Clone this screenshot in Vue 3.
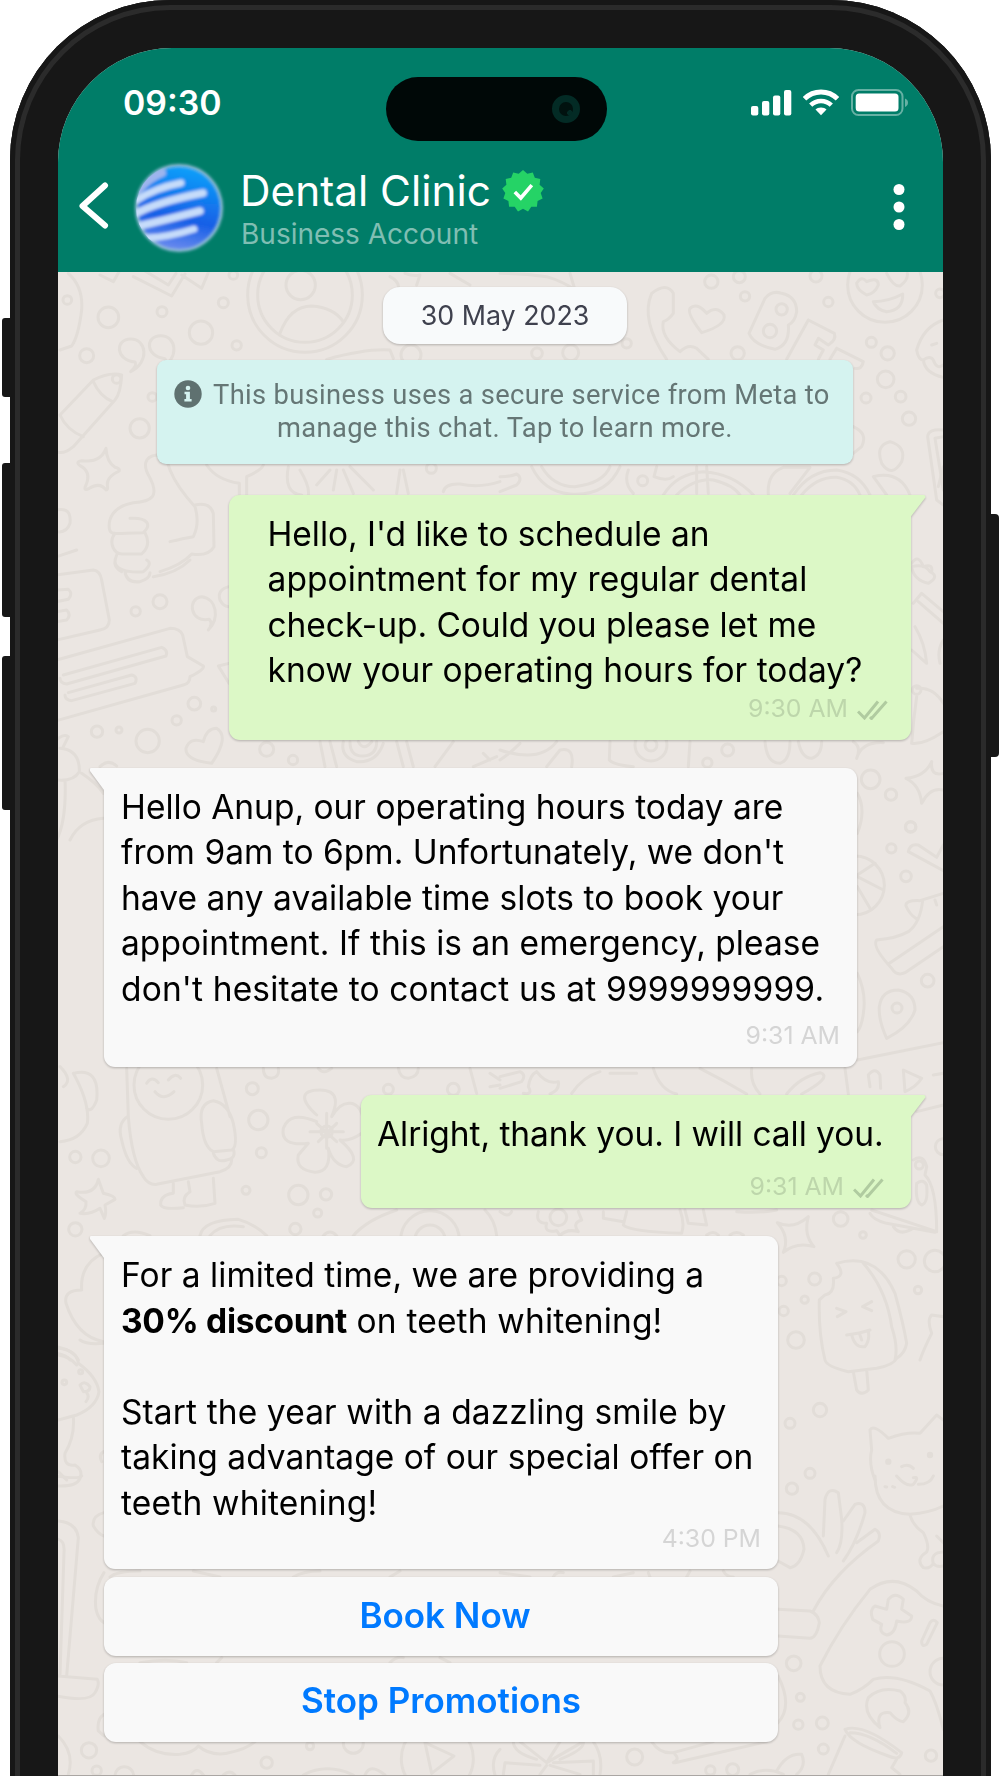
<template>
  <div class="stage">
    <span class="side-key left silent"></span>
    <span class="side-key left vol-up"></span>
    <span class="side-key left vol-down"></span>
    <span class="side-key right power"></span>

    <div class="phone">
      <div class="screen">
        <header class="top">
          <div class="status-bar">
            <span class="clock">09:30</span>
            <div class="island"><span class="camera"></span></div>
            <svg class="status-icons" width="158" height="28" viewBox="0 0 158 28">
              <g fill="#fff">
                <rect x="0" y="17" width="7.3" height="9.5" rx="2" />
                <rect x="11" y="12" width="7.3" height="14.5" rx="2" />
                <rect x="22" y="6.5" width="7.3" height="20" rx="2" />
                <rect x="33" y="1" width="7.3" height="25.5" rx="2" />
                <path d="M70 18.5c2.3 0 4.4.8 5.5 2L70 26.3l-5.5-5.8c1.1-1.2 3.2-2 5.5-2z" />
              </g>
              <g fill="none" stroke="#fff">
                <path d="M53.5 9.8a23.5 23.5 0 0 1 33 0" stroke-width="5" />
                <path d="M59.7 16.2a14.8 14.8 0 0 1 20.6 0" stroke-width="4.6" />
              </g>
              <rect x="101" y="1" width="50.5" height="25" rx="6.5" fill="none" stroke="#fff" stroke-opacity=".4" stroke-width="2" />
              <rect x="104.7" y="4.5" width="42.8" height="18" rx="3.5" fill="#fff" />
              <path d="M154 9.5c1.8.6 3 2.2 3 4.2s-1.2 3.6-3 4.2z" fill="#fff" fill-opacity=".4" />
            </svg>
          </div>

          <div class="chat-header">
            <svg class="back" width="30" height="50" viewBox="0 0 30 50">
              <path d="M26 4.5 3.5 25 26 44.5" fill="none" stroke="#fff" stroke-width="6" stroke-linecap="round" stroke-linejoin="round" />
            </svg>
            <svg class="avatar" width="96" height="96" viewBox="0 0 96 96">
              <defs>
                <linearGradient id="ball" x1=".7" y1="0" x2=".5" y2="1">
                  <stop offset="0" stop-color="#0aa2fb" />
                  <stop offset=".65" stop-color="#165fe6" />
                  <stop offset="1" stop-color="#6688ee" />
                </linearGradient>
                <clipPath id="round"><circle cx="48" cy="48" r="43" /></clipPath>
                <filter id="soft" x="-20%" y="-20%" width="140%" height="140%">
                  <feGaussianBlur stdDeviation="1.7" />
                </filter>
              </defs>
              <circle cx="48" cy="48" r="44" fill="#8fb9d8" filter="url(#soft)" />
              <g clip-path="url(#round)" filter="url(#soft)">
                <circle cx="48" cy="48" r="41" fill="url(#ball)" />
                <g fill="none" stroke="#c6dcfa" stroke-linecap="round">
                  <path d="M8 30Q18 18 31 13" stroke-width="8" stroke="#9db5ee" />
                  <path d="M6 40Q24 28 50 23" stroke-width="7" />
                  <path d="M4 54Q26 42 72 33" stroke-width="7.5" />
                  <path d="M8 66Q34 60 69 51" stroke-width="7.5" />
                  <path d="M16 78Q38 77 63 69" stroke-width="7" />
                </g>
              </g>
            </svg>
            <div class="contact">
              <div class="name-row">
                <span class="name">Dental Clinic</span>
                <svg class="verified" width="44" height="44" viewBox="-22 -22 44 44">
                  <polygon :points="badgePoints" fill="#25d366" />
                  <path d="M-8.2 1 -2.2 7 8.8-5.8" fill="none" stroke="#fff" stroke-width="3.6" />
                </svg>
              </div>
              <div class="account">Business Account</div>
            </div>
            <svg class="menu" width="12" height="48" viewBox="0 0 12 48" fill="#fff">
              <circle cx="6" cy="6.5" r="5.5" />
              <circle cx="6" cy="24" r="5.5" />
              <circle cx="6" cy="41.5" r="5.5" />
            </svg>
          </div>
        </header>

        <main class="chat">
          <svg class="wallpaper" width="885" height="1504" viewBox="58 272 885 1504">
            <g
              v-for="(tile, i) in wallpaper"
              :key="i"
              :transform="`translate(${tile.x} ${tile.y}) scale(.33333)`"
            >
              <circle v-for="(c, n) in tile.circles" :key="n" :cx="c[0]" :cy="c[1]" :r="c[2]" />
              <path v-for="(d, n) in tile.paths" :key="'p' + n" :d="d" />
            </g>
          </svg>

          <div class="date">30 May 2023</div>

          <div class="notice">
            <div>
              <svg class="info" width="28" height="28" viewBox="0 0 28 28">
                <circle cx="14" cy="14" r="13.7" fill="#5f7170" />
                <circle cx="14" cy="8" r="2.3" fill="#d5f3f0" />
                <path d="M10.5 11.8h5.4v7.2h1.7v2.5h-7.2v-2.5h1.7v-4.7h-1.6z" fill="#d5f3f0" />
              </svg>
              <span>This business uses a secure service from Meta to</span>
            </div>
            <div class="notice-second">manage this chat. Tap to learn more.</div>
          </div>

          <div v-for="msg in messages" :key="msg.id" class="bubble" :class="[msg.from, msg.id]">
            <p v-for="(line, i) in msg.lines" :key="i" :style="{ letterSpacing: line.track + 'px' }">
              <b v-if="line.strong">{{ line.strong }}</b>{{ line.text }}
            </p>
            <div class="meta">
              <span>{{ msg.time }}</span>
              <svg v-if="msg.from === 'sent'" class="ticks" width="31" height="20" viewBox="0 0 31 20">
                <path d="M1 11.5 7.5 18 21 1.5M13 17l1.5 1.5L29.5 1.5" fill="none" stroke="#b0cba0" stroke-width="3" />
              </svg>
            </div>
          </div>

          <button v-for="label in replies" :key="label" class="reply">{{ label }}</button>
        </main>
      </div>
    </div>
  </div>
</template>

<script setup>
// track is the letter spacing of the line in px
const messages = [
  {
    id: "ask",
    from: "sent",
    time: "9:30 AM",
    lines: [
      { text: "Hello, I'd like to schedule an", track: -0.05 },
      { text: "appointment for my regular dental", track: 0.08 },
      { text: "check-up. Could you please let me", track: -0.04 },
      { text: "know your operating hours for today?", track: 0.04 },
    ],
  },
  {
    id: "hours",
    from: "received",
    time: "9:31 AM",
    lines: [
      { text: "Hello Anup, our operating hours today are", track: 0 },
      { text: "from 9am to 6pm. Unfortunately, we don't", track: 0.02 },
      { text: "have any available time slots to book your", track: 0.05 },
      { text: "appointment. If this is an emergency, please", track: 0.04 },
      { text: "don't hesitate to contact us at 9999999999.", track: 0.15 },
    ],
  },
  {
    id: "thanks",
    from: "sent",
    time: "9:31 AM",
    lines: [{ text: "Alright, thank you. I will call you.", track: -0.05 }],
  },
  {
    id: "promo",
    from: "received",
    time: "4:30 PM",
    lines: [
      { text: "For a limited time, we are providing a", track: 0.05 },
      { strong: "30% discount", text: " on teeth whitening!", track: 0.17 },
      { text: "\u00a0", track: 0 },
      { text: "Start the year with a dazzling smile by", track: 0.12 },
      { text: "taking advantage of our special offer on", track: 0.02 },
      { text: "teeth whitening!", track: 0.19 },
    ],
  },
];

const replies = ["Book Now", "Stop Promotions"];

// scalloped seal, 13 teeth
const badgePoints = Array.from({ length: 26 }, (_, i) => {
  const r = i % 2 ? 17.8 : 21;
  const a = (i * Math.PI) / 13 - Math.PI / 2;
  return `${(r * Math.cos(a)).toFixed(1)},${(r * Math.sin(a)).toFixed(1)}`;
}).join(" ");

// chat background doodles, one entry per part of the wall
const wallpaper = [
  {
    x: 0,
    y: 270,
    circles: [
      [325, 142, 31], [486, 125, 15], [670, 98, 15], [603, 188, 35], [710, 226, 14], [260, 257, 21],
      [419, 475, 29], [202, 90, 13], [700, 15, 13], [915, 75, 172], [915, 75, 142], [902, 45, 44],
      [1233, 255, 30], [350, 327, 13], [457, 381, 13], [1294, 595, 15],
    ],
    paths: [
      "M840 190Q870 108 935 108Q1000 112 1030 155",
      "M205 10Q250 50 245 120Q235 200 215 228L180 240",
      "M300 15 340 35 360 0M400 20 515 78 555 12M430 0 505 45 528 10M545 15 605 55 628 0",
      "M392 305Q412 285 405 276C345 270 345 207 392 207C440 207 450 276 392 305Z",
      "M482 295Q502 275 495 266C435 260 435 197 482 197C530 197 540 266 482 295Z",
      "M180 435 280 330Q330 305 365 315Q362 370 345 390L220 530Q190 555 170 545M280 335Q300 380 338 395M180 435Q200 480 250 500",
      "M318 535Q302 580 245 572Q225 575 240 587Q275 605 258 645Q248 665 268 655Q300 635 318 660Q325 660 322 645Q320 620 358 603Q360 595 345 592Q320 575 318 535Z",
      "M470 555C430 560 430 590 448 620C480 680 455 695 400 698C335 710 325 750 328 775C330 800 360 788 430 788C455 765 445 742 390 745M345 790C325 815 340 855 370 852L425 852Q455 825 435 788M350 855Q335 890 365 905M470 555Q500 560 510 600Q530 650 585 710Q600 760 580 800Q550 805 510 815M585 705Q630 695 640 730L642 830Q625 860 575 852Q545 885 480 905",
      "M620 585Q650 630 718 640L718 675M740 675 740 620Q785 600 790 585M865 590Q850 670 905 675M900 600Q930 650 925 675M990 600 950 645M1010 600 1000 660M1030 600 1060 670M1050 590 1120 660M1200 600 1190 670M1210 600 1225 670M980 268Q1100 235 1170 240L1180 265M1330 665Q1335 640 1380 642Q1440 655 1500 635",
      "M170 720Q215 710 210 760Q200 790 170 785M170 860 230 840M1170 20Q1200 35 1195 60M1215 10Q1240 20 1260 15L1250 45M1350 10 1410 45",
    ],
  },
  {
    x: 500,
    y: 270,
    circles: [
      [634, 35, 20], [718, 20, 18], [735, 79, 14], [985, 96, 14], [948, 18, 18], [1114, 217, 15],
      [1163, 250, 20], [1157, 328, 25], [1098, 384, 15], [1202, 380, 16], [1227, 446, 20], [713, 250, 20],
      [111, 250, 16], [212, 248, 24], [380, 220, 14], [1155, 45, 112], [845, 118, 17], [810, 183, 20],
      [428, 632, 15], [1320, 70, 13],
    ],
    paths: [
      "M455 70Q500 35 520 70L520 130Q505 150 490 155Q480 200 540 245Q565 220 590 235L625 268M455 70Q420 150 500 268",
      "M605 188Q560 130 570 115Q590 95 620 130Q650 105 672 135Q680 165 605 188Z",
      "M747 190 795 85Q815 60 845 70Q890 80 890 125Q885 155 865 165Q870 225 825 238Q760 225 747 190Z",
      "M925 150 1003 190Q1010 210 985 225L955 205 945 225 970 240 955 268M925 150 860 268M1010 235 1090 275Q1085 300 1065 295M1010 235 990 268",
      "M1070 40Q1085 15 1100 35Q1135 20 1135 45Q1125 70 1100 75Q1070 60 1070 40ZM1160 10Q1180 50 1200 48Q1225 30 1222 10M1120 95Q1165 95 1208 72Q1210 120 1160 125Q1130 120 1120 95Z",
      "M1330 150Q1270 170 1250 240Q1255 270 1270 270Q1290 255 1300 270Q1310 300 1330 285M1270 270Q1275 310 1330 322M1295 225 1310 220",
      "M1060 470Q1105 490 1085 530L1060 550M1170 515Q1220 530 1205 575Q1175 625 1145 580Q1125 525 1170 515ZM1330 480Q1285 475 1283 500L1310 690 1330 705M1330 500 1305 505 1330 660",
      "M95 590Q130 665 210 672Q320 680 360 590M125 590Q160 650 225 650Q310 640 330 590M0 620Q30 620 50 612Q70 625 50 645L0 665M385 600Q370 640 400 670M470 590 462 620Q500 635 520 620M490 675Q530 610 610 605Q700 610 760 675M530 675Q580 625 640 630Q700 645 720 675M590 590 590 670M620 590 625 670M805 675Q800 610 850 592L930 592 870 670M880 675Q930 600 1010 600Q1080 610 1110 675M905 675Q950 620 1010 622Q1060 630 1080 675M1120 620Q1200 600 1230 675M1120 620 1160 675M0 10Q70 10 140 20Q190 35 225 60L210 10M1330 590 1315 650",
      "M1235 880Q1255 850 1270 890Q1300 880 1295 905",
    ],
  },
  {
    x: 0,
    y: 560,
    circles: [
      [407, 154, 14], [480, 125, 21], [583, 431, 19], [530, 481, 14], [641, 447, 6], [291, 515, 17],
      [357, 510, 9], [443, 543, 35], [800, 568, 21], [879, 600, 14],
    ],
    paths: [
      "M345 10Q360 40 430 35Q460 10 440 0M375 35Q380 70 420 65Q450 55 450 38M460 50Q530 40 570 0",
      "M170 45 280 30Q300 32 305 60L328 180Q328 205 300 210L170 240M170 90 205 88Q220 100 205 118L170 125M170 155 200 150Q215 165 200 180L170 185",
      "M170 300 510 205Q540 205 548 225L562 290 610 318Q615 328 570 350Q570 370 550 375L170 482M190 345 485 262Q505 270 498 288L200 372Q180 370 180 355M205 398 395 345Q415 350 405 370L215 422Q195 420 195 405",
      "M625 210Q640 190 628 178C570 190 560 115 605 110C650 115 660 175 625 210ZM687 80Q650 90 660 120Q670 140 687 140M687 310 655 318 687 370",
      "M635 610Q555 600 558 565Q570 530 610 545Q620 505 650 505Q690 530 635 610ZM170 540Q190 520 205 530L190 560M180 565Q240 570 238 635Q220 665 170 660M245 640Q290 670 310 700M300 620Q325 595 350 618M170 840Q200 780 195 660M210 840Q240 780 310 775",
      "M960 545 975 620M990 545 1010 620M1030 545Q1020 590 1070 605Q1130 610 1150 550M1050 545Q1050 590 1090 588Q1130 585 1130 545M1075 545Q1090 575 1115 545M1190 545 1210 620M1220 545 1240 620M1360 545 1305 620M1450 580 1470 600M1420 620 1490 590",
    ],
  },
  {
    x: 500,
    y: 560,
    circles: [[453, 555, 18], [453, 555, 48], [683, 570, 18], [622, 608, 14], [1112, 658, 28], [1173, 704, 17], [1232, 801, 16], [1250, 390, 13]],
    paths: [
      "M0 600Q30 580 60 550M0 570Q120 610 170 545M140 620 180 570Q225 560 215 620M330 545 328 600Q340 615 400 620M570 545 565 620M795 545Q800 610 840 610Q870 600 870 545M895 545Q905 595 935 595Q965 585 965 545",
      "M1070 595Q1085 560 1060 545M1070 595Q1085 545 1150 548M1295 605Q1290 650 1330 640M1295 605Q1275 650 1218 655Q1260 675 1265 730Q1290 680 1330 690",
      "M1250 385Q1300 380 1330 430M1235 550Q1270 555 1330 515M1250 410Q1240 480 1235 550M1245 200Q1275 250 1280 310L1235 270M1330 240Q1310 270 1320 310M1235 20Q1275 10 1290 35Q1320 50 1285 70Q1240 60 1235 20M1240 130 1265 100 1330 155M1255 125 1330 190",
    ],
  },
  {
    x: 820,
    y: 760,
    circles: [[272, 200, 15], [214, 265, 14], [258, 349, 16], [323, 662, 19], [231, 744, 15], [105, 376, 88]],
    paths: [
      "M265 275Q270 250 295 255L350 292 370 255M265 275 370 332M112 345 165 310M112 350 190 390M112 380 150 445",
      "M370 400 300 422Q255 420 258 438Q270 465 288 475M308 422Q300 490 265 515Q230 535 170 540Q155 560 215 625Q230 650 255 638L370 560M205 612 370 500M345 420 350 435",
      "M200 835Q175 780 178 740Q185 690 235 690Q285 700 285 750Q270 800 200 835ZM112 100Q140 150 112 220M112 640Q140 700 130 760Q125 800 112 815M112 900 370 848",
    ],
  },
  {
    x: 0,
    y: 1060,
    circles: [
      [505, 75, 103], [757, 86, 18], [775, 180, 29], [784, 278, 15], [738, 391, 12], [895, 405, 29], [978, 403, 17],
      [953, 459, 12], [886, 507, 17], [226, 291, 17], [303, 295, 25], [226, 508, 20], [980, 215, 17], [1165, 88, 15],
      [1360, 88, 18], [1290, 540, 88], [1290, 540, 45],
    ],
    paths: [
      "M380 25 385 170Q395 300 430 350Q445 375 470 373L660 335Q695 325 695 300M650 25 690 170M385 168Q350 190 365 240Q380 310 410 325M605 190Q595 130 640 122Q685 130 700 190Q715 260 695 270L640 275Q610 260 605 190M640 280Q650 310 680 300Q710 295 700 268M520 370 520 400Q480 405 482 435Q490 450 550 443M565 365 570 395Q545 410 555 435Q600 445 645 430L640 355",
      "M440 70Q455 45 475 68M505 60Q525 35 542 55M465 95Q490 125 522 95",
      "M295 358Q285 405 230 395Q220 402 258 425Q260 450 240 460Q270 465 300 445L313 475Q320 460 315 435L345 418Q345 408 310 400Z",
      "M950 165C900 120 900 90 960 90C1020 90 1010 135 995 170C1030 110 1080 120 1090 180M1085 220Q1050 245 1020 240Q1090 300 1040 320Q1000 315 985 265Q995 335 945 337Q885 330 895 285L925 250Q840 260 850 205Q870 150 950 185M980 160 980 265M930 215 1030 215M950 190 1010 245M1010 190 955 245",
      "M180 20Q220 60 190 80M220 40Q300 20 290 120Q275 160 260 145M220 40Q270 130 262 190Q240 240 180 245",
      "M790 25Q790 55 815 55Q840 50 835 25M955 25Q970 45 995 25M1195 25Q1200 55 1225 55Q1255 50 1255 25M1410 25 1430 100M600 527Q610 480 715 478Q760 490 800 527M630 527Q660 490 730 500M370 527Q400 505 450 527M1060 527Q1100 480 1190 450M1455 450Q1485 480 1490 527M970 527Q990 505 1010 527M1470 40 1500 60M1470 80 1500 75",
      "M310 580Q240 610 245 690Q190 690 198 730Q230 830 310 845M170 860Q220 870 235 900M170 880Q200 885 210 900",
    ],
  },
  {
    x: 500,
    y: 1060,
    circles: [
      [1022, 477, 22], [1089, 525, 10], [1220, 598, 26], [1305, 603, 32], [944, 657, 18], [914, 719, 11], [845, 663, 14],
      [851, 753, 14], [1254, 690, 11], [888, 840, 25], [175, 472, 25], [1330, 260, 24], [1258, 315, 12],
    ],
    paths: [
      "M0 50 60 35Q80 45 65 65L0 85M110 35Q90 45 85 80Q100 105 70 100M110 35Q140 75 175 65Q180 90 150 102M215 100Q250 50 300 35M330 40 410 40M460 25Q480 90 530 102M600 25Q670 60 740 102M755 25Q750 70 780 102M860 102Q900 50 960 38Q1000 50 905 102M1035 25 1045 102M1110 80 1105 45Q1125 20 1140 45L1142 85M1210 30 1215 95Q1250 80 1265 55ZM1300 45 1330 40M1250 155 1330 135",
      "M115 455Q105 490 140 490Q130 520 170 512L180 527Q200 505 235 515Q215 490 245 480L235 455M310 455 310 475 370 485M380 455 370 495Q390 515 545 520Q555 490 540 450M555 450 565 490 620 495 610 450M710 455Q780 460 830 450M620 525Q640 510 655 525M690 525Q710 510 730 525M0 455Q25 475 35 455",
      "M832 488Q880 510 925 470Q910 525 942 560Q890 545 850 577Q870 530 832 488ZM1240 300Q1270 280 1280 320L1275 345Q1310 380 1310 515L1115 450M1110 460Q1120 480 1160 490L1305 517M1180 500Q1200 530 1240 505M1250 370Q1270 355 1280 375Q1285 430 1265 435Q1245 425 1250 370",
      "M1010 610Q1130 575 1185 700Q1210 790 1220 850Q1215 880 1190 895M1010 610Q1040 650 1000 655Q1005 700 975 705L958 720Q955 820 975 900 980 920 1045 935L1130 925Q1180 915 1190 895M1090 610Q1160 690 1175 800Q1195 860 1185 900M1010 745 1038 755 1012 770M1115 725 1088 740 1115 752M1040 825Q1080 820 1110 810M1055 825Q1065 865 1095 860Q1110 840 1105 815M1080 825 1085 840M1330 770 1295 765Q1280 780 1295 820Q1270 870 1260 900M1060 935 1070 990Q1085 1010 1105 990L1100 930",
    ],
  },
  {
    x: 50,
    y: 1340,
    circles: [[43, 127, 7], [92, 95, 6]],
    paths: [
      "M25 25Q80 30 85 70Q140 110 147 155Q140 200 80 225L25 240M90 0Q110 15 162 10M90 135Q105 120 120 140Q120 155 100 155ZM110 158Q120 170 108 185M70 230Q75 290 45 340Q40 380 75 375Q100 390 90 415Q80 440 25 438M25 395 50 420M160 335Q145 345 155 365",
      "M25 45Q60 50 80 75",
    ],
  },
  {
    // cat between the ice cream and the cactus
    x: 500,
    y: 1390,
    circles: [[870, 100, 15], [930, 250, 15], [1165, 215, 5], [1290, 195, 5], [960, 60, 20]],
    paths: [
      "M1125 270Q1105 220 1115 180L1110 120Q1120 100 1165 145Q1220 125 1260 130L1310 75 1330 90M1205 230Q1225 220 1240 235",
    ],
  },
  {
    x: 0,
    y: 1476,
    circles: [[267, 823, 23], [290, 884, 14], [800, 860, 17], [373, 900, 28], [930, 810, 11], [1060, 802, 30], [1312, 848, 108]],
    paths: [
      "M175 135Q230 140 235 185L200 600M175 190Q195 195 192 230L180 595M170 600 292 610Q300 625 285 650Q270 680 170 660M312 110Q275 120 280 150Q295 175 312 180M312 290Q280 340 288 400Q295 430 312 440M170 0Q235 10 245 0M175 780Q225 830 205 895M312 715Q290 730 295 765L312 780",
      "M330 303Q350 285 420 285M580 285 660 303M880 303Q910 285 960 285M1170 303 1200 285M420 797Q470 840 540 835Q580 830 595 810Q630 840 680 832Q740 820 765 797M575 897Q590 870 610 897M670 897Q690 880 705 897M910 897Q980 860 1060 897M1095 897Q1110 860 1155 897M1275 800 1362 840 1295 892ZM1485 897Q1470 850 1500 820M420 560Q500 545 560 560M650 560 665 545M1170 560Q1190 540 1210 545M1320 545 1350 560",
    ],
  },
  {
    x: 500,
    y: 1476,
    circles: [
      [876, 38, 17], [1176, 534, 37], [881, 562, 22], [901, 664, 12], [895, 746, 14], [967, 741, 18], [970, 819, 15],
      [1293, 839, 17], [404, 843, 24], [631, 883, 14], [698, 881, 18], [1330, 587, 40],
    ],
    paths: [
      "M1125 0Q1125 110 1230 115Q1290 110 1330 90M1230 118Q1240 150 1270 170Q1290 210 1280 228Q1245 250 1270 275Q1290 280 1300 262Q1310 275 1330 270M1300 262Q1290 230 1330 228M1155 32 1160 33M1178 32 1184 34M1190 0Q1220 35 1240 25Q1260 0 1240 5M1255 25Q1290 25 1300 0M1310 180 1330 200",
      "M834 110Q930 110 985 240M970 180 975 70Q985 30 1015 50L1025 130Q1030 200 1010 230M1030 135 1065 85Q1095 75 1095 110Q1070 200 1030 255M1070 200 1125 160Q1145 170 1135 195Q1000 290 940 405M834 150Q910 160 912 220Q900 270 870 275L834 255M834 400 930 405Q955 415 958 440Q950 485 930 487L834 480",
      "M1330 390Q1280 380 1250 345Q1180 290 1110 340Q1020 450 960 570Q960 650 1050 655Q1090 640 1120 610Q1190 590 1290 645Q1310 680 1330 760",
      "M1165 370Q1185 345 1210 370L1205 400 1235 420Q1235 445 1190 435Q1185 475 1160 477Q1135 470 1145 445L1118 430Q1108 400 1125 390L1160 400ZM1290 440Q1300 425 1312 440L1280 505Q1265 515 1265 495Z",
      "M1140 755Q1085 710 1105 665Q1140 630 1200 645Q1220 660 1215 680Q1240 710 1210 737Q1190 735 1170 710Q1125 705 1140 755ZM1035 760Q1090 740 1205 830Q1200 855 1165 840Q1050 800 1035 760ZM1050 770Q1110 770 1190 832M1035 780 985 895M1190 850 1175 875 1200 895",
      "M455 797Q480 835 520 830L640 797M520 860Q540 850 525 835M525 860 800 797M750 895Q800 870 850 895M830 885Q860 830 905 835Q920 870 890 895M834 600Q880 690 834 740M300 895Q310 840 280 797M140 860 250 797M140 860 180 797M140 860 60 797M10 895 15 860 120 868M140 868 120 895M150 868 240 895M160 860 280 855 280 895M40 797Q40 830 110 850M250 797Q255 820 180 850M0 290 90 303M160 303Q170 285 190 290M340 303 400 290M445 290 450 303M570 285 560 303M670 285Q680 303 700 303",
    ],
  },
];
</script>

<style>
body {
  margin: 0;
  background: #fff;
}
</style>

<style scoped>
.stage {
  position: relative;
  box-sizing: border-box;
  width: 1000px;
  height: 1776px;
  padding-left: 10px;
  overflow: hidden;
  font-family: Inter, "Liberation Sans", sans-serif;
}

.side-key {
  position: absolute;
  width: 12px;
  background: #171717;
}
.left {
  left: 2px;
  border-radius: 3px 0 0 3px;
}
.right {
  left: 987px;
  border-radius: 0 4px 4px 0;
}
.silent {
  top: 318px;
  height: 79px;
}
.vol-up {
  top: 463px;
  height: 154px;
}
.vol-down {
  top: 656px;
  height: 154px;
}
.power {
  top: 514px;
  height: 243px;
}

.phone {
  position: relative;
  box-sizing: border-box;
  width: 981px;
  height: 2000px;
  padding: 48px 48px 0;
  border-radius: 160px 160px 0 0;
  background: #171717;
  box-shadow: inset 0 0 0 5px #171717, inset 0 0 0 10px #2b2b2b;
}
.screen {
  display: flex;
  flex-direction: column;
  box-sizing: border-box;
  width: 885px;
  height: 1728px;
  overflow: hidden;
  border-radius: 114px 114px 0 0;
  border-bottom: 1px solid #aaa6a3;
  background: #ebe6e2;
}

.top {
  height: 223.5px;
  flex: none;
  background: #007d68;
  color: #fff;
}
.status-bar {
  display: flex;
  align-items: flex-start;
  height: 97px;
}
.clock {
  width: 263px;
  margin: 34px 0 0 65px;
  font-size: 33.8px;
  line-height: 42px;
  font-weight: 600;
}
.island {
  display: flex;
  align-items: center;
  justify-content: flex-end;
  box-sizing: border-box;
  width: 221px;
  height: 64px;
  margin-top: 29px;
  padding-right: 27px;
  border-radius: 32px;
  background: #000807;
}
.camera {
  box-sizing: border-box;
  width: 28px;
  height: 28px;
  border: 7px solid #032b25;
  border-radius: 50%;
  background: radial-gradient(circle at 78% 78%, #032b25 2.5px, #01120f 3px);
}
.status-icons {
  margin: 41px 0 0 144px;
}
.chat-header {
  display: flex;
  align-items: flex-start;
}
.back {
  margin: 36px 0 0 21px;
}
.avatar {
  margin: 15px 0 0 22px;
}
.contact {
  width: 638px;
  margin: 15px 0 0 14px;
  white-space: nowrap;
}
.name-row {
  display: flex;
  align-items: center;
  height: 54px;
}
.name {
  width: 260px;
  margin-left: -1px;
  padding: 7px 1px 0 0;
  font-size: 42.3px;
  font-weight: 400;
}
.verified {
  margin-top: 8px;
}
.account {
  margin-top: 5px;
  color: #80beb3;
  font-size: 28px;
  line-height: 30px;
  font-weight: 400;
}
.menu {
  margin: 38px 0 0 14px;
}

.chat {
  position: relative;
  display: flex;
  flex-direction: column;
  flex: 1;
  padding-top: 15.5px;
}
.wallpaper {
  position: absolute;
  top: 0;
  left: 0;
  fill: none;
  stroke: #e2ddd8;
  stroke-width: 9;
  stroke-linecap: round;
  stroke-linejoin: round;
}
.date,
.notice,
.bubble,
.reply {
  position: relative;
  flex: none;
  box-sizing: border-box;
  filter: drop-shadow(0 1.5px 1px rgba(0, 0, 0, 0.24));
}
.date {
  width: 244px;
  height: 57px;
  margin-left: 325px;
  border-radius: 17px;
  background: #f8fafb;
  color: #3f414e;
  font-size: 26.8px;
  line-height: 57px;
  text-align: center;
}
.notice {
  width: 696px;
  height: 104px;
  margin: 15.5px 0 0 99px;
  padding-top: 19px;
  border-radius: 9px;
  background: #d5f3f0;
  color: #657675;
  font-family: Roboto, "Liberation Sans", sans-serif;
  font-size: 27.3px;
  line-height: 33px;
  letter-spacing: 0.35px;
  white-space: nowrap;
}
.info {
  float: left;
  margin: 1px 11px 0 17px;
}
.notice-second {
  text-align: center;
}

.bubble {
  display: flex;
  flex-direction: column;
  padding: 16.5px 17px 0;
  border-radius: 11px;
  color: #000;
  font-size: 33.5px;
  line-height: 45.5px;
  white-space: nowrap;
}
.bubble p {
  margin: 0;
}
.bubble b {
  font-weight: 700;
  letter-spacing: -0.28px;
}
.bubble::before {
  content: "";
  position: absolute;
  top: 0;
  width: 25px;
  height: 22px;
}
.sent {
  border-top-right-radius: 0;
  background: #dcf8c6;
}
.sent::before {
  right: -14.5px;
  background: #dcf8c6;
  clip-path: polygon(0 0, 96% 0, 100% 10%, 40% 100%, 0 100%);
}
.received {
  margin-left: 46px;
  border-top-left-radius: 0;
  background: #f9f9f9;
}
.received::before {
  left: -14.5px;
  background: #f9f9f9;
  clip-path: polygon(100% 0, 4% 0, 0 10%, 58% 100%, 100% 100%);
}
.ask {
  width: 682px;
  height: 245px;
  margin: 31.5px 0 0 171px;
  padding: 16.5px 23px 20px 38.5px;
}
.hours {
  width: 753px;
  height: 298.5px;
  margin-top: 28px;
  padding-bottom: 19.5px;
}
.thanks {
  width: 550px;
  height: 113px;
  margin: 28.5px 0 0 303px;
  padding: 16.5px 27px 10px 16px;
}
.promo {
  width: 674px;
  height: 333px;
  margin-top: 28px;
  padding-top: 17px;
  padding-bottom: 19px;
}
.meta {
  display: flex;
  align-items: center;
  justify-content: flex-end;
  gap: 9px;
  margin-top: auto;
  color: #d5d5d5;
  font-size: 24.8px;
  line-height: 24px;
}
.sent .meta {
  color: #bdd6ab;
}
.ticks {
  margin-top: 3px;
}

.reply {
  width: 674px;
  height: 79px;
  margin: 7.5px 0 0 46px;
  padding: 0 0 2px;
  border: 0;
  border-radius: 12px;
  background: #f9f9f9;
  color: #007aff;
  font: 600 35px Inter, "Liberation Sans", sans-serif;
}
.reply:not(:last-child) {
  padding-left: 8px;
}
.reply:last-child {
  margin-top: 7px;
  padding-bottom: 4px;
}
</style>
